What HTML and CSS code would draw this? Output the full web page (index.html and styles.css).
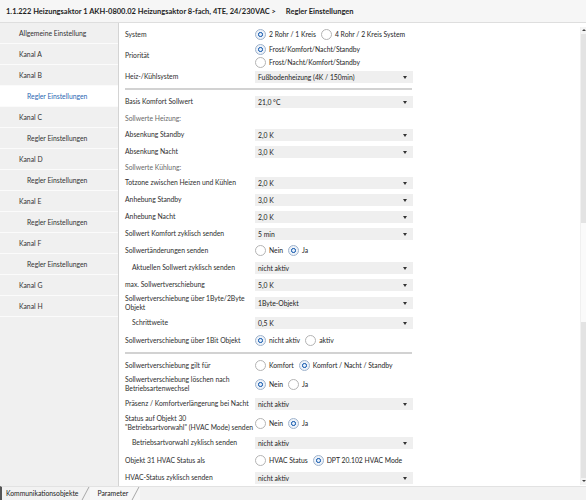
FILE: index.html
```html
<!DOCTYPE html>
<html lang="de">
<head>
  <meta charset="UTF-8">
  <title>Regler Einstellungen</title>
  <link rel="stylesheet" href="styles.css">
</head>
<body>
  <div class="titlebar">
    <span>1.1.222 Heizungsaktor 1 AKH-0800.02 Heizungsaktor 8-fach, 4TE, 24/230VAC &gt;</span>
    <span class="crumb">Regler Einstellungen</span>
  </div>

  <div class="workspace">
    <ul class="sidebar">
      <li>Allgemeine Einstellung</li>
      <li>Kanal A</li>
      <li>Kanal B</li>
      <li class="sub active">Regler Einstellungen</li>
      <li>Kanal C</li>
      <li class="sub">Regler Einstellungen</li>
      <li>Kanal D</li>
      <li class="sub">Regler Einstellungen</li>
      <li>Kanal E</li>
      <li class="sub">Regler Einstellungen</li>
      <li>Kanal F</li>
      <li class="sub">Regler Einstellungen</li>
      <li>Kanal G</li>
      <li>Kanal H</li>
    </ul>

    <div class="main">
      <div class="form">
        <div class="row first">
          <div class="label">System</div>
          <div class="radios">
            <span class="radio checked">2 Rohr / 1 Kreis</span>
            <span class="radio">4 Rohr / 2 Kreis System</span>
          </div>
        </div>
        <div class="row tall">
          <div class="label">Priorität</div>
          <div class="radios stacked">
            <span class="radio checked">Frost/Komfort/Nacht/Standby</span>
            <span class="radio">Frost/Nacht/Komfort/Standby</span>
          </div>
        </div>
        <div class="row">
          <div class="label">Heiz-/Kühlsystem</div>
          <div class="select">Fußbodenheizung (4K / 150min)</div>
        </div>

        <hr class="divider">

        <div class="row">
          <div class="label">Basis Komfort Sollwert</div>
          <div class="select">21,0 °C</div>
        </div>
        <div class="heading">Sollwerte Heizung:</div>
        <div class="row">
          <div class="label">Absenkung Standby</div>
          <div class="select">2,0 K</div>
        </div>
        <div class="row">
          <div class="label">Absenkung Nacht</div>
          <div class="select">3,0 K</div>
        </div>
        <div class="heading short">Sollwerte Kühlung:</div>
        <div class="row">
          <div class="label">Totzone zwischen Heizen und Kühlen</div>
          <div class="select">2,0 K</div>
        </div>
        <div class="row">
          <div class="label">Anhebung Standby</div>
          <div class="select">3,0 K</div>
        </div>
        <div class="row">
          <div class="label">Anhebung Nacht</div>
          <div class="select">2,0 K</div>
        </div>
        <div class="row">
          <div class="label">Sollwert Komfort zyklisch senden</div>
          <div class="select">5 min</div>
        </div>
        <div class="row">
          <div class="label">Sollwertänderungen senden</div>
          <div class="radios">
            <span class="radio">Nein</span>
            <span class="radio checked">Ja</span>
          </div>
        </div>
        <div class="row">
          <div class="label indent">Aktuellen Sollwert zyklisch senden</div>
          <div class="select">nicht aktiv</div>
        </div>
        <div class="row">
          <div class="label">max. Sollwertverschiebung</div>
          <div class="select">5,0 K</div>
        </div>
        <div class="row double">
          <div class="label">Sollwertverschiebung über 1Byte/2Byte<br>Objekt</div>
          <div class="select">1Byte-Objekt</div>
        </div>
        <div class="row spaced">
          <div class="label indent">Schrittweite</div>
          <div class="select">0,5 K</div>
        </div>
        <div class="row">
          <div class="label">Sollwertverschiebung über 1Bit Objekt</div>
          <div class="radios">
            <span class="radio checked">nicht aktiv</span>
            <span class="radio">aktiv</span>
          </div>
        </div>

        <hr class="divider">

        <div class="row">
          <div class="label">Sollwertverschiebung gilt für</div>
          <div class="radios">
            <span class="radio">Komfort</span>
            <span class="radio checked">Komfort / Nacht / Standby</span>
          </div>
        </div>
        <div class="row double">
          <div class="label">Sollwertverschiebung löschen nach<br>Betriebsartenwechsel</div>
          <div class="radios">
            <span class="radio checked">Nein</span>
            <span class="radio">Ja</span>
          </div>
        </div>
        <div class="row spaced">
          <div class="label">Präsenz / Komfortverlängerung bei Nacht</div>
          <div class="select">nicht aktiv</div>
        </div>
        <div class="row double">
          <div class="label">Status auf Objekt 30<br>"Betriebsartvorwahl" (HVAC Mode) senden</div>
          <div class="radios">
            <span class="radio">Nein</span>
            <span class="radio checked">Ja</span>
          </div>
        </div>
        <div class="row spaced">
          <div class="label indent">Betriebsartvorwahl zyklisch senden</div>
          <div class="select">nicht aktiv</div>
        </div>
        <div class="row">
          <div class="label">Objekt 31 HVAC Status als</div>
          <div class="radios">
            <span class="radio">HVAC Status</span>
            <span class="radio checked">DPT 20.102 HVAC Mode</span>
          </div>
        </div>
        <div class="row">
          <div class="label">HVAC-Status zyklisch senden</div>
          <div class="select">nicht aktiv</div>
        </div>
      </div>

      <div class="scrollbar">
        <div class="sb-arrow up"></div>
        <div class="sb-track top"></div>
        <div class="sb-thumb"></div>
        <div class="sb-track"></div>
        <div class="sb-arrow down"></div>
      </div>
    </div>
  </div>

  <div class="tabbar">
    <span class="tab">Kommunikationsobjekte</span>
    <span class="tab active">Parameter</span>
  </div>
</body>
</html>
```

FILE: styles.css
```css
:root {
  --text: #262626;
  --muted: #6a6a6a;
  --panel: #f0f0f0;
  --line: #d8d8d8;
  --field: #efefef;
  --accent: #2a68b3;
}

* {
  box-sizing: border-box;
}

html, body {
  margin: 0;
  height: 100%;
}

body {
  font-family: "Segoe UI", Lato, "Noto Sans", sans-serif;
  font-size: 6.8px;
  color: var(--text);
  background-color: #fff;
  display: flex;
  flex-direction: column;
  overflow: hidden;
}

/* title bar */
.titlebar {
  height: 23px;
  flex: none;
  display: flex;
  align-items: center;
  padding-left: 6px;
  background-color: #f6f6f6;
  border-bottom: 1px solid #dedede;
  font-size: 7.5px;
  font-weight: bold;
  color: #1e1e1e;
}

.titlebar .crumb {
  margin-left: 10px;
}

/* sidebar + form */
.workspace {
  flex: 1;
  display: flex;
  min-height: 0;
}

.sidebar {
  list-style: none;
  margin: 0;
  padding: 0;
  width: 119px;
  flex: none;
  background-color: var(--panel);
  border-right: 1px solid #d4d4d4;
}

.sidebar li {
  height: 21px;
  line-height: 20px;
  padding-left: 19px;
  border-bottom: 1px solid #fbfbfb;
  color: #333;
  white-space: nowrap;
}

.sidebar li.sub {
  padding-left: 27px;
}

.sidebar li.active {
  background-color: #fff;
  color: var(--accent);
}

.main {
  flex: 1;
  display: flex;
  min-width: 0;
  overflow: hidden;
}

.form {
  flex: 1;
  padding-left: 6px;
  padding-top: 3px;
}

.row {
  display: grid;
  grid-template-columns: 130px 158px;
  align-items: center;
  min-height: 17px;
}

.row.tall {
  min-height: 25px;
}

.row.double {
  min-height: 20px;
}

.row.spaced {
  min-height: 19px;
}

.label {
  color: #2e2e2e;
  line-height: 9.5px;
  white-space: nowrap;
}

.label.indent {
  padding-left: 7px;
}

.heading {
  height: 16px;
  line-height: 16px;
  color: var(--muted);
}

.heading.short {
  height: 14px;
  line-height: 14px;
}

.divider {
  width: 287px;
  margin: 3px 0;
  border: none;
  border-top: 2px solid #d2d2d2;
  height: 0;
}

/* controls */
.select {
  position: relative;
  height: 12px;
  line-height: 12px;
  padding-left: 3px;
  background-color: var(--field);
  color: #222;
}

.select::after {
  content: '';
  position: absolute;
  right: 6px;
  top: 5px;
  border-left: 2.5px solid transparent;
  border-right: 2.5px solid transparent;
  border-top: 3px solid #333;
}

.radios {
  display: flex;
  align-items: center;
  gap: 5px;
}

.radios.stacked {
  flex-direction: column;
  align-items: flex-start;
  gap: 2px;
}

.radio {
  display: inline-flex;
  align-items: center;
  gap: 3px;
  line-height: 9px;
  white-space: nowrap;
}

.radio::before {
  content: '';
  width: 9px;
  height: 9px;
  flex: none;
  border-radius: 50%;
  border: 1px solid #b4b4b4;
  background-color: #fff;
}

.radio.checked::before {
  border-color: #9fb3cc;
  background: radial-gradient(circle, #e6eef8 0 1.3px, #3f78bd 1.5px 2.4px, #edf2f9 2.7px);
}

/* scrollbar */
.scrollbar {
  width: 6px;
  flex: none;
  margin-top: 4px;
  margin-bottom: 1px;
  display: flex;
  flex-direction: column;
  background-color: #e3e3e3;
  border-left: 1px solid #f0f0f0;
}

.sb-arrow {
  height: 7px;
  flex: none;
  position: relative;
  background-color: #f4f4f4;
}

.sb-arrow::after {
  content: '';
  position: absolute;
  left: 1px;
  top: 2px;
  border-left: 2px solid transparent;
  border-right: 2px solid transparent;
}

.sb-arrow.up::after {
  border-bottom: 2px solid #444;
}

.sb-arrow.down::after {
  border-top: 2px solid #444;
}

.sb-track {
  flex: 1;
}

.sb-track.top {
  flex: none;
  height: 189px;
}

.sb-thumb {
  height: 99px;
  flex: none;
  background-color: #fafafa;
}

/* bottom tabs */
.tabbar {
  height: 14px;
  flex: none;
  display: flex;
  align-items: center;
  background-color: #f2f2f2;
  border-top: 1px solid #e2e2e2;
  border-left: 2px solid #555;
}

.tab {
  position: relative;
  height: 100%;
  line-height: 13px;
  padding: 0 12px 0 4px;
  color: #222;
}

.tab.active {
  padding-left: 7px;
  background-color: #f7f7f7;
}

.tab::after {
  content: '';
  position: absolute;
  right: 4px;
  top: 0;
  bottom: 0;
  width: 1px;
  background-color: #a8a8a8;
  transform: skewX(-28deg);
}
```
